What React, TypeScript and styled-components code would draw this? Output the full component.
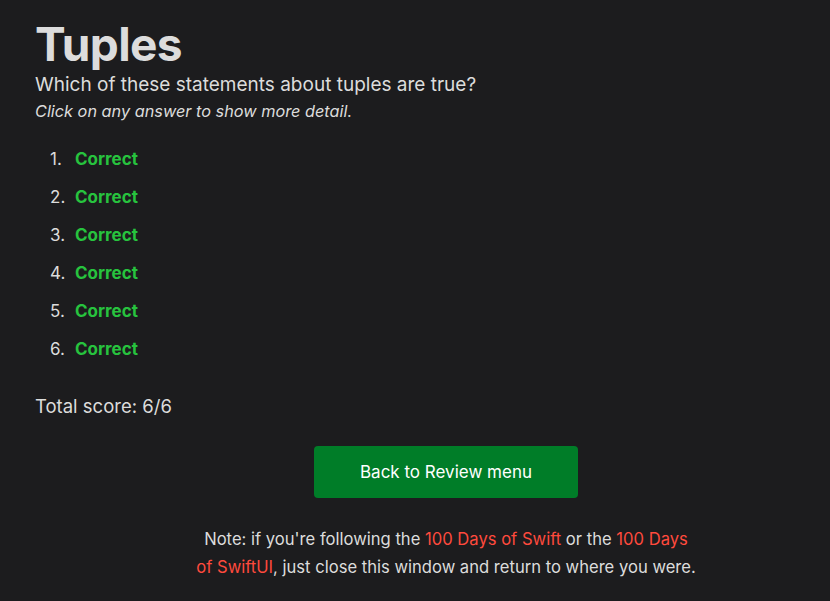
import React from 'react'
import styled, { createGlobalStyle } from 'styled-components'

const Global = createGlobalStyle`
  html, body {
    margin:0;
    padding:0;
    background:#1c1c1e;
    overflow:hidden;
  }
  body {
    font-family:Inter, "Noto Sans", sans-serif;
    color:#dcdcdc;
  }
`

const Page = styled.main`
  width:857px;
  padding:16px 0 0 35px;
  box-sizing:border-box;
`

const Title = styled.h1`
  margin:0;
  font-size:46px;
  line-height:56px;
  font-weight:700;
  color:#dcdcdc;
  letter-spacing:-0.6px;
`

const Question = styled.p`
  margin:0;
  font-size:19px;
  line-height:26px;
`

const Hint = styled.p`
  margin:2px 0 0 0;
  font-size:16.3px;
  line-height:22px;
  font-style:italic;
`

const List = styled.ol`
  margin:18px 0 0 0;
  padding:0 0 0 15px;
  list-style:none;
  counter-reset:answer;
`

const Item = styled.li`
  font-size:17px;
  line-height:38px;
  counter-increment:answer;
  &::before {
    content:counter(answer) ".";
    display:inline-block;
    width:25px;
    color:#dcdcdc;
    font-weight:400;
  }
`

const Verdict = styled.span<{ $ok: boolean }>`
  font-weight:700;
  color:${p => (p.$ok ? '#27c33e' : '#ff453a')};
`

const Score = styled.p`
  margin:25px 0 0 0;
  font-size:18.5px;
  line-height:26px;
`

const Footer = styled.div`
  display:flex;
  flex-direction:column;
  align-items:center;
  margin-top:27px;
`

const Button = styled.button`
  width:264px;
  height:52px;
  border:none;
  border-radius:4px;
  background:#007d28;
  color:#fff;
  font-family:inherit;
  font-size:17px;
`

const Note = styled.p`
  max-width:500px;
  margin:27px 0 0 0;
  text-align:center;
  font-size:16.6px;
  line-height:28px;
`

const Link = styled.a`
  color:#ff4a3d;
  text-decoration:none;
`

const results = [true, true, true, true, true, true]

export default function App() {
  const score = results.filter(Boolean).length
  return (
    <Page>
      <Global />
      <Title>Tuples</Title>
      <Question>Which of these statements about tuples are true?</Question>
      <Hint>Click on any answer to show more detail.</Hint>
      <List>
        {results.map((ok, i) => (
          <Item key={i}>
            <Verdict $ok={ok}>{ok ? 'Correct' : 'Wrong'}</Verdict>
          </Item>
        ))}
      </List>
      <Score>Total score: {score}/{results.length}</Score>
      <Footer>
        <Button>Back to Review menu</Button>
        <Note>
          Note: if you're following the <Link href="#">100 Days of Swift</Link> or the{' '}
          <Link href="#">100 Days of SwiftUI</Link>, just close this window and return to where you were.
        </Note>
      </Footer>
    </Page>
  )
}
